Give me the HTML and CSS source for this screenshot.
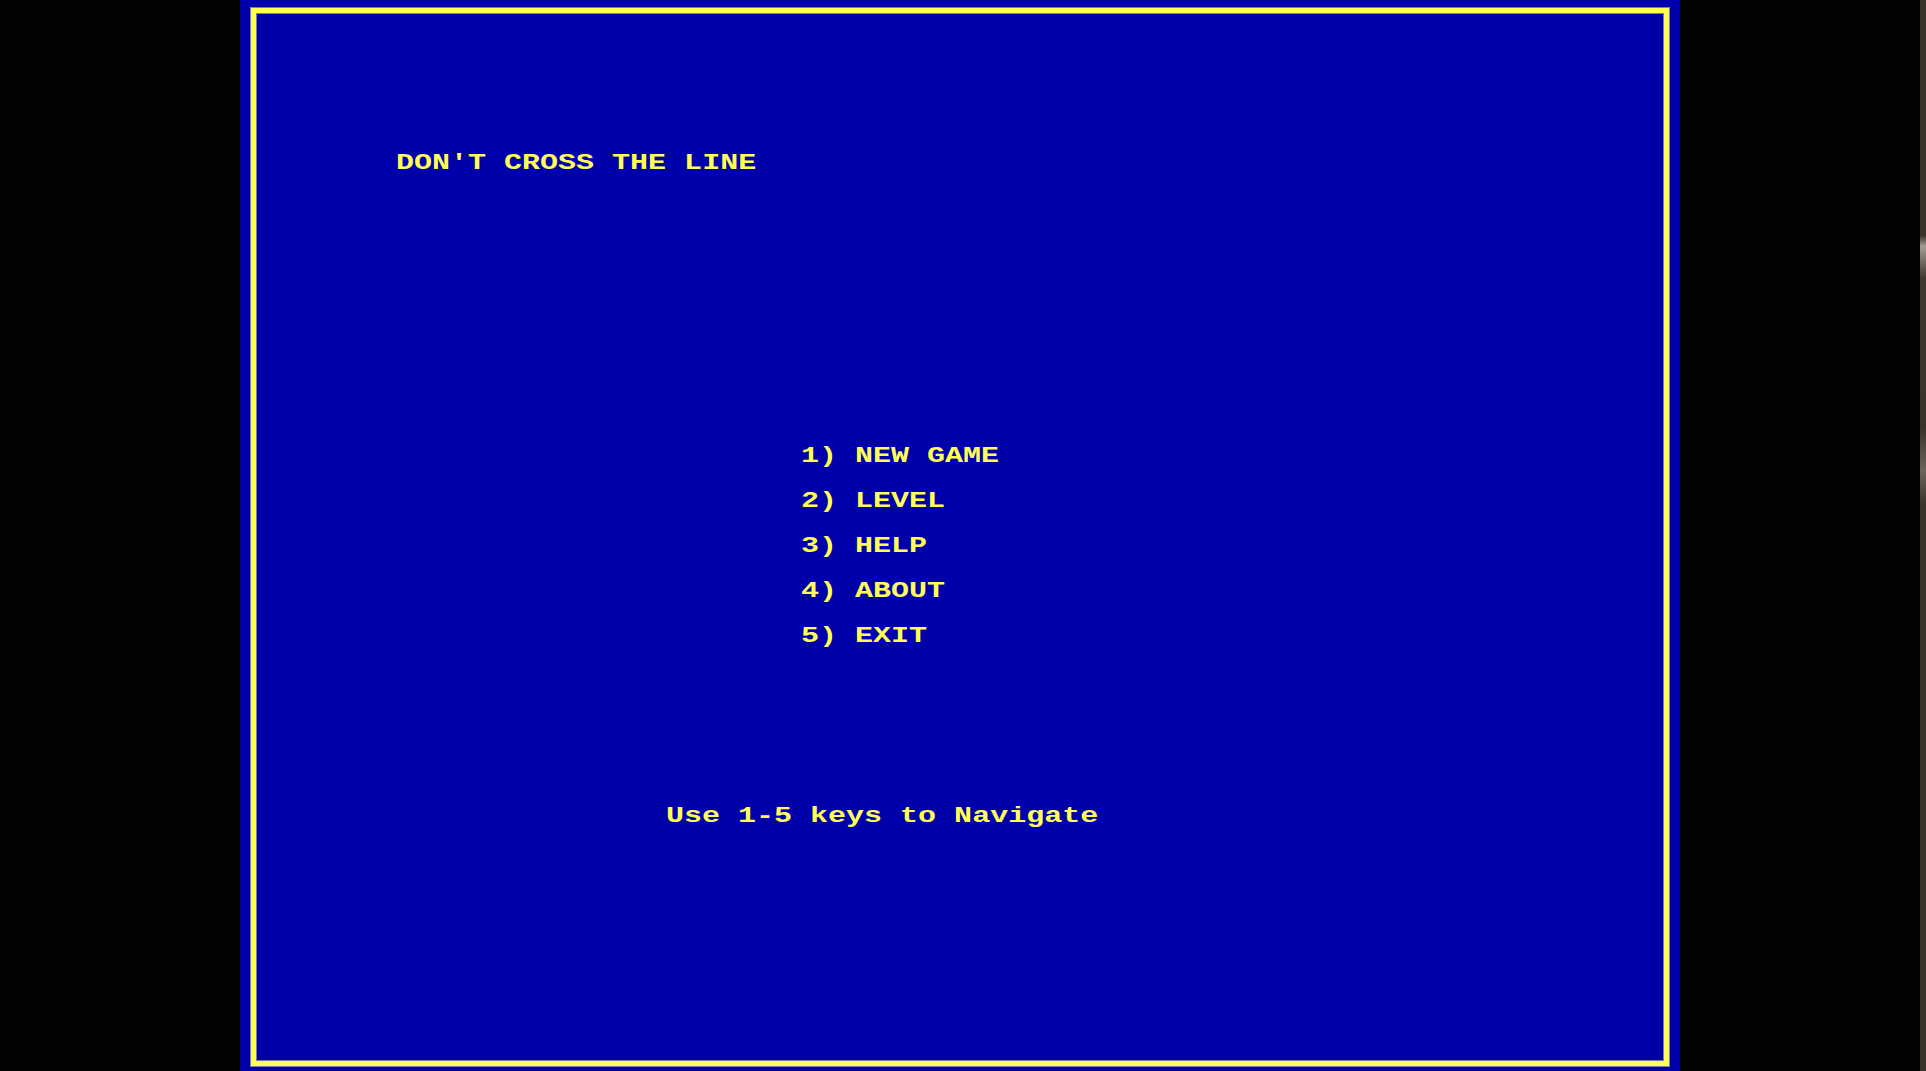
FILE: index.html
```html
<!DOCTYPE html>
<html>
<head>
<meta charset="utf-8">
<title>Don't Cross The Line</title>
<link rel="stylesheet" href="styles.css">
</head>
<body>
<main class="screen">
  <div class="frame">
    <div class="title line">DON'T CROSS THE LINE</div>
    <ul class="menu">
      <li class="line">1) NEW GAME</li>
      <li class="line">2) LEVEL</li>
      <li class="line">3) HELP</li>
      <li class="line">4) ABOUT</li>
      <li class="line">5) EXIT</li>
    </ul>
    <div class="hint line">Use 1-5 keys to Navigate</div>
  </div>
</main>
<div class="spacer"></div>
<div class="edge"></div>
</body>
</html>
```

FILE: styles.css
```css
html, body {
  margin: 0;
  padding: 0;
}
body {
  width: 1926px;
  height: 1071px;
  background: #020202;
  display: flex;
  overflow: hidden;
  font-family: "Liberation Mono", "DejaVu Sans Mono", monospace;
  font-weight: bold;
  color: #ffff55;
}
.screen {
  margin-left: 240px;
  width: 1440px;
  height: 1071px;
  box-sizing: border-box;
  padding: 8px 11px 5px 11px;
  background: #0000aa;
}
.frame {
  height: 100%;
  box-sizing: border-box;
  border: 5px solid #ffff55;
  box-shadow: 0 0 0 1px #7a7ab8, inset 0 0 0 1px #7a7ab8;
  display: flex;
  flex-direction: column;
  align-items: flex-start;
}
.line {
  font-size: 22px;
  line-height: 22px;
  white-space: pre;
  transform: scaleX(1.364);
  transform-origin: 0 0;
}
.title {
  margin-top: 140px;
  margin-left: 140px;
}
.menu {
  list-style: none;
  margin: 271px 0 0 545px;
  padding: 0;
  display: flex;
  flex-direction: column;
  gap: 23px;
}
.hint {
  margin-top: 158px;
  margin-left: 410px;
}
.spacer {
  flex: 1;
}
.edge {
  width: 6px;
  height: 1071px;
  background: linear-gradient(to bottom, #3a3327 0%, #3a3327 22%, #a39c92 23%, #3f372b 26%, #3a3327 40%, #6b645a 44%, #3a3327 47%, #3a3327 100%);
}
```
